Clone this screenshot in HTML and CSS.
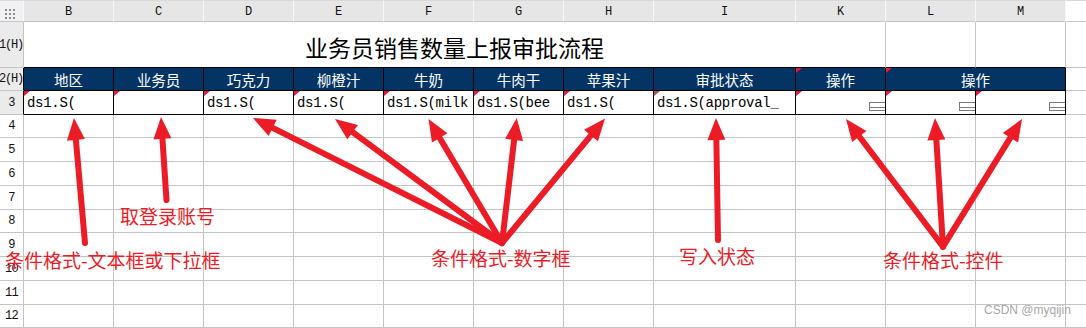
FILE: index.html
```html
<!DOCTYPE html>
<html lang="zh">
<head>
<meta charset="utf-8">
<title>业务员销售数量上报审批流程</title>
<link rel="stylesheet" href="styles.css">
</head>
<body>
<div class="sheet">
  <div class="grid">
    <!-- column headers -->
    <div class="c corner"><span class="dots"><i></i><i></i><i></i><i></i><i></i><i></i><i></i><i></i><i></i></span></div>
    <div class="c hd">B</div><div class="c hd">C</div><div class="c hd">D</div><div class="c hd">E</div>
    <div class="c hd">F</div><div class="c hd">G</div><div class="c hd">H</div><div class="c hd">I</div>
    <div class="c hd">K</div><div class="c hd">L</div><div class="c hd">M</div>
    <div class="c fill hdfill"></div>

    <!-- row 1 -->
    <div class="c rh sel clip">1(H)</div>
    <div class="c title">业务员销售数量上报审批流程</div>
    <div class="c r1"></div><div class="c r1"></div>
    <div class="c fill"></div>

    <!-- row 2 -->
    <div class="c rh sel clip edge">2(H)</div>
    <div class="c th">地区</div>
    <div class="c th">业务员</div>
    <div class="c th">巧克力</div>
    <div class="c th">柳橙汁</div>
    <div class="c th">牛奶</div>
    <div class="c th">牛肉干</div>
    <div class="c th">苹果汁</div>
    <div class="c th">审批状态</div>
    <div class="c th mk">操作</div>
    <div class="c th mk span2">操作</div>
    <div class="c fill"></div>

    <!-- row 3 -->
    <div class="c rh sel edge">3</div>
    <div class="c td mk">ds1.S(</div>
    <div class="c td mk"></div>
    <div class="c td mk">ds1.S(</div>
    <div class="c td mk">ds1.S(</div>
    <div class="c td mk">ds1.S(milk</div>
    <div class="c td mk">ds1.S(bee</div>
    <div class="c td mk">ds1.S(</div>
    <div class="c td mk dim">ds1.S(approval_</div>
    <div class="c td mk"><span class="ctl"></span></div>
    <div class="c td mk"><span class="ctl"></span></div>
    <div class="c td mk"><span class="ctl"></span></div>
    <div class="c fill"></div>

    <!-- rows 4-12 -->
    <div class="c rh">4</div><div class="c"></div><div class="c"></div><div class="c"></div><div class="c"></div><div class="c"></div><div class="c"></div><div class="c"></div><div class="c"></div><div class="c"></div><div class="c"></div><div class="c"></div><div class="c fill"></div>
    <div class="c rh">5</div><div class="c"></div><div class="c"></div><div class="c"></div><div class="c"></div><div class="c"></div><div class="c"></div><div class="c"></div><div class="c"></div><div class="c"></div><div class="c"></div><div class="c"></div><div class="c fill"></div>
    <div class="c rh">6</div><div class="c"></div><div class="c"></div><div class="c"></div><div class="c"></div><div class="c"></div><div class="c"></div><div class="c"></div><div class="c"></div><div class="c"></div><div class="c"></div><div class="c"></div><div class="c fill"></div>
    <div class="c rh">7</div><div class="c"></div><div class="c"></div><div class="c"></div><div class="c"></div><div class="c"></div><div class="c"></div><div class="c"></div><div class="c"></div><div class="c"></div><div class="c"></div><div class="c"></div><div class="c fill"></div>
    <div class="c rh">8</div><div class="c"></div><div class="c"></div><div class="c"></div><div class="c"></div><div class="c"></div><div class="c"></div><div class="c"></div><div class="c"></div><div class="c"></div><div class="c"></div><div class="c"></div><div class="c fill"></div>
    <div class="c rh">9</div><div class="c"></div><div class="c"></div><div class="c"></div><div class="c"></div><div class="c"></div><div class="c"></div><div class="c"></div><div class="c"></div><div class="c"></div><div class="c"></div><div class="c"></div><div class="c fill"></div>
    <div class="c rh">10</div><div class="c"></div><div class="c"></div><div class="c"></div><div class="c"></div><div class="c"></div><div class="c"></div><div class="c"></div><div class="c"></div><div class="c"></div><div class="c"></div><div class="c"></div><div class="c fill"></div>
    <div class="c rh">11</div><div class="c"></div><div class="c"></div><div class="c"></div><div class="c"></div><div class="c"></div><div class="c"></div><div class="c"></div><div class="c"></div><div class="c"></div><div class="c"></div><div class="c"></div><div class="c fill"></div>
    <div class="c rh">12</div><div class="c"></div><div class="c"></div><div class="c"></div><div class="c"></div><div class="c"></div><div class="c"></div><div class="c"></div><div class="c"></div><div class="c"></div><div class="c"></div><div class="c"></div><div class="c fill"></div>
  </div>

  <div class="annot">
    <svg class="arrows" width="1086" height="328" viewBox="0 0 1086 328">
      <g stroke="#ec1c26" stroke-width="6" stroke-linecap="round" fill="none">
        <line x1="85" y1="243" x2="75.9" y2="139.9"/>
        <line x1="166.5" y1="200" x2="162.45" y2="138.95"/>
        <line x1="502" y1="243" x2="272.66" y2="127.87"/>
        <line x1="502" y1="243" x2="352.66" y2="132.12"/>
        <line x1="502" y1="243" x2="439.72" y2="137.93"/>
        <line x1="502" y1="243" x2="514.13" y2="139.85"/>
        <line x1="502" y1="243" x2="590.98" y2="135.45"/>
        <line x1="718" y1="240" x2="716.36" y2="140"/>
        <line x1="943" y1="246.7" x2="859.3" y2="136.52"/>
        <line x1="943" y1="246.7" x2="936.36" y2="139.96"/>
        <line x1="943" y1="246.7" x2="1010.43" y2="137.7"/>
      </g>
      <g fill="#ec1c26">
        <polygon points="74,118 84.9,139.1 66.9,140.7"/>
        <polygon points="161,117 171.43,138.36 153.47,139.54"/>
        <polygon points="253,118 276.7,119.83 268.62,135.91"/>
        <polygon points="335,119 358.03,124.89 347.29,139.35"/>
        <polygon points="428.5,119 447.46,133.34 431.98,142.52"/>
        <polygon points="516.7,118 523.07,140.9 505.19,138.8"/>
        <polygon points="605,118.5 597.91,141.19 584.05,129.71"/>
        <polygon points="716,118 725.36,139.85 707.36,140.15"/>
        <polygon points="846,119 866.47,131.08 852.13,141.96"/>
        <polygon points="935,118 945.34,139.4 927.38,140.52"/>
        <polygon points="1022,119 1018.08,142.43 1002.78,132.97"/>
      </g>
    </svg>
    <span class="lbl lbl-account">取登录账号</span>
    <span class="lbl lbl-text">条件格式-文本框或下拉框</span>
    <span class="lbl lbl-number">条件格式-数字框</span>
    <span class="lbl lbl-state">写入状态</span>
    <span class="lbl lbl-widget">条件格式-控件</span>
    <span class="wm">CSDN @myqijin</span>
  </div>
</div>
</body>
</html>
```

FILE: styles.css
```css
html, body {
  margin: 0;
  padding: 0;
  background: #ffffff;
}

body {
  width: 1086px;
  height: 328px;
  overflow: hidden;
}

.sheet {
  position: relative;
  width: 1086px;
  height: 328px;
}

.grid {
  display: grid;
  grid-template-columns: 24px repeat(7, 90px) 142px repeat(3, 90px) 20px;
  grid-template-rows: 22px 46px 23px 24px 23px 24px 24px 24px 23px 24px 24px 24px 23px;
}

.c {
  box-sizing: border-box;
  position: relative;
  overflow: hidden;
  border-right: 1px solid #c4c4c4;
  border-bottom: 1px solid #c4c4c4;
  min-width: 0;
}

.fill {
  border-right: 0;
}

/* column header row */
.corner {
  background: #f1f1f3;
  border-right-color: #f8f8f8;
  border-top: 1px solid #dadada;
}

.dots {
  position: absolute;
  left: 5px;
  top: 8px;
  display: grid;
  grid-template-columns: repeat(3, 2px);
  grid-auto-rows: 2px;
  gap: 2px;
}

.dots i {
  display: block;
  background: #8c8c8c;
}

.hd {
  background: #e6e6e6;
  border-top: 1px solid #dadada;
  border-right-color: #f7f7f7;
  display: flex;
  align-items: center;
  justify-content: center;
  font: 12px/1 "Liberation Mono", monospace;
  color: #111;
  padding-top: 1px;
}

.hdfill {
  border-top: 1px solid #dadada;
}

/* row header */
.rh {
  display: flex;
  align-items: center;
  justify-content: center;
  font: 12px/1 "Liberation Mono", monospace;
  color: #111;
  white-space: nowrap;
  background: #ffffff;
  letter-spacing: -0.6px;
}

.rh.sel {
  background: #ebebeb;
}

.rh.clip {
  justify-content: flex-end;
  letter-spacing: -1.2px;
}

.rh.edge {
  border-right-color: #000;
}

/* row 1 */
.title {
  grid-column: span 9;
  display: flex;
  align-items: center;
  justify-content: center;
  padding-top: 5px;
  font: 23px/1 "Noto Sans CJK SC", sans-serif;
  color: #000;
  border-bottom-color: #000;
}

.r1 {
  border-bottom-color: #000;
}

/* row 2 header */
.th {
  background: #033464;
  color: #ffffff;
  border-right-color: #000;
  border-bottom-color: #000;
  display: flex;
  align-items: center;
  justify-content: center;
  padding-top: 2px;
  font: 14.5px/1 "Noto Sans CJK SC", sans-serif;
}

.span2 {
  grid-column: span 2;
}

/* row 3 data */
.td {
  border-right-color: #000;
  border-bottom-color: #000;
  display: flex;
  align-items: center;
  padding-left: 3px;
  padding-top: 1px;
  font: 14px/1 "Liberation Mono", monospace;
  letter-spacing: -0.3px;
  color: #000;
  white-space: nowrap;
}

/* red comment markers */
.mk::before {
  content: "";
  position: absolute;
  left: 0;
  top: 0;
  border-top: 5px solid #f0143c;
  border-right: 6px solid transparent;
}

.dim::before {
  border-top-color: #b84a5c;
}

/* widget control */
.ctl {
  position: absolute;
  right: 0;
  bottom: 3px;
  width: 16px;
  height: 9px;
  box-sizing: border-box;
  border: 1px solid #7a7a7a;
  border-right: 0;
}

.ctl::after {
  content: "";
  position: absolute;
  left: 0;
  right: 0;
  top: 4px;
  border-top: 1px solid #7a7a7a;
}

/* annotations */
.annot {
  position: absolute;
  left: 0;
  top: 0;
  width: 1086px;
  height: 328px;
  pointer-events: none;
}

.arrows {
  position: absolute;
  left: 0;
  top: 0;
}

.lbl {
  position: absolute;
  font: 19px/1 "Noto Sans CJK SC", sans-serif;
  color: #ea1c27;
  white-space: nowrap;
}

.lbl-account { left: 120px; top: 206px; }
.lbl-text    { left: 5px;   top: 250px; }
.lbl-number  { left: 431px; top: 248px; }
.lbl-state   { left: 679px; top: 246px; }
.lbl-widget  { left: 883px; top: 250px; }

.wm {
  position: absolute;
  left: 984px;
  top: 304px;
  font: 12px/1 "Liberation Sans", Arial, sans-serif;
  color: #a6a6a6;
  white-space: nowrap;
}
```
